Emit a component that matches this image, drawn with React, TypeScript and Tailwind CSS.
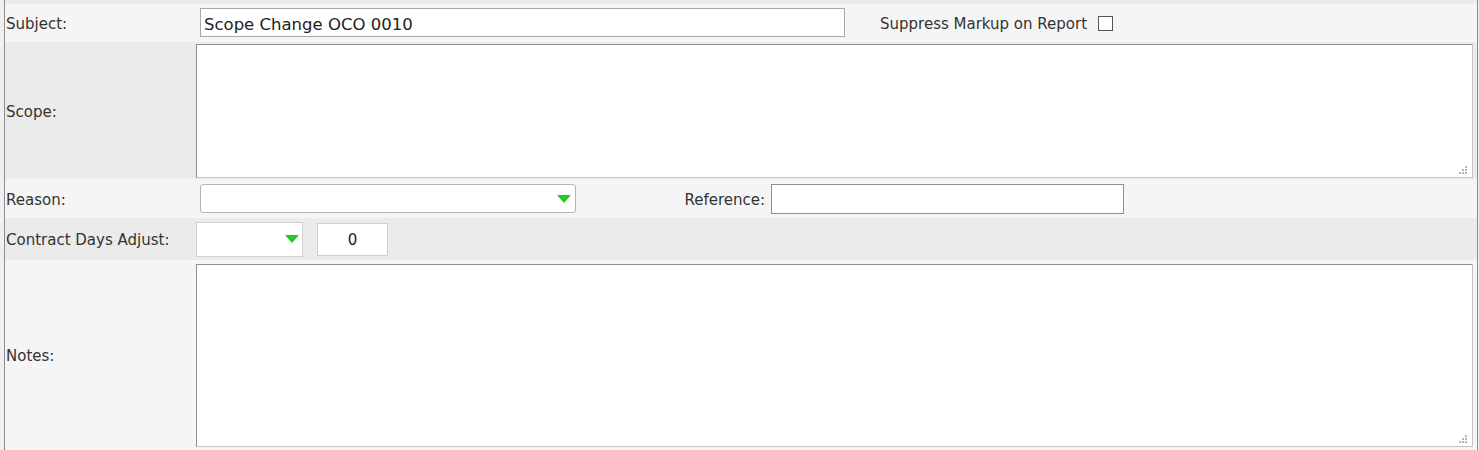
import React from "react";

function Grip() {
  const dots = [
    [6, 0],
    [3, 3],
    [6, 3],
    [0, 6],
    [3, 6],
    [6, 6],
  ];
  return (
    <svg width="8" height="8" viewBox="0 0 8 8" className="absolute right-[5px] bottom-[3px]">
      {dots.map(([x, y], i) => (
        <rect key={i} x={x} y={y} width="2" height="2" fill="#b4b4b4" />
      ))}
    </svg>
  );
}

function Arrow() {
  return (
    <svg width="14" height="8" viewBox="0 0 14 8">
      <polygon points="0,0 14,0 7,8" fill="#22cc22" />
    </svg>
  );
}

export default function App() {
  return (
    <div className="w-[1479px] h-[450px] overflow-hidden bg-[#f0f0f0] font-['DejaVu_Sans',sans-serif] text-[15px] text-[#333]">
      <div className="ml-[4px] w-[1474px] h-full border-x border-[#8c8c8c] bg-[#ebebeb] pt-[4px]">
        {/* Subject */}
        <div className="flex items-center h-[38px] bg-[#f5f5f5]">
          <div className="w-[191px] pl-[1px] pt-[3px]">Subject:</div>
          <input
            readOnly
            value="Scope Change OCO 0010"
            className="ml-[4px] -mt-[1px] w-[645px] h-[29px] border border-[#a9a9a9] bg-white px-[3px] pt-[3px] text-[16.5px] text-[#222] outline-none"
          />
          <span className="ml-[35px] pt-[3px]">Suppress Markup on Report</span>
          <span className="ml-[11px] w-[15px] h-[15px] border border-[#555] bg-white" />
        </div>

        {/* Scope */}
        <div className="flex items-center h-[137px] bg-[#ebebeb]">
          <div className="w-[191px] pl-[1px] pt-[3px]">Scope:</div>
          <div className="relative w-[1277px] h-[134px] border border-t-[#8f8f8f] border-l-[#8f8f8f] border-r-[#c6c6c6] border-b-[#c6c6c6] bg-white">
            <Grip />
          </div>
        </div>

        {/* Reason / Reference */}
        <div className="flex items-center h-[39px] bg-[#f5f5f5]">
          <div className="w-[191px] pl-[1px] pt-[3px]">Reason:</div>
          <div className="ml-[4px] flex items-center justify-end w-[376px] h-[29px] rounded-[3px] border border-[#b5b5b5] bg-white pr-[4px]">
            <Arrow />
          </div>
          <div className="w-[195px] pr-[6px] pt-[3px] text-right">Reference:</div>
          <div className="w-[353px] h-[30px] border border-[#8f8f8f] bg-white" />
        </div>

        {/* Contract Days Adjust */}
        <div className="flex items-center h-[42px] bg-[#ebebeb]">
          <div className="w-[191px] pl-[1px] pt-[3px]">Contract Days Adjust:</div>
          <div className="flex items-center justify-end w-[107px] h-[35px] border border-[#cfcfcf] bg-white pr-[3px]">
            <Arrow />
          </div>
          <div className="ml-[14px] flex items-center justify-center w-[71px] h-[33px] border border-[#cfcfcf] bg-white pt-[3px] text-[15px] text-[#222]">
            0
          </div>
        </div>

        {/* Notes */}
        <div className="flex items-center h-[190px] bg-[#f5f5f5]">
          <div className="w-[191px] pl-[1px] pt-[3px]">Notes:</div>
          <div className="relative w-[1277px] h-[183px] border border-t-[#8f8f8f] border-l-[#8f8f8f] border-r-[#c6c6c6] border-b-[#c6c6c6] bg-white">
            <Grip />
          </div>
        </div>
      </div>
    </div>
  );
}
